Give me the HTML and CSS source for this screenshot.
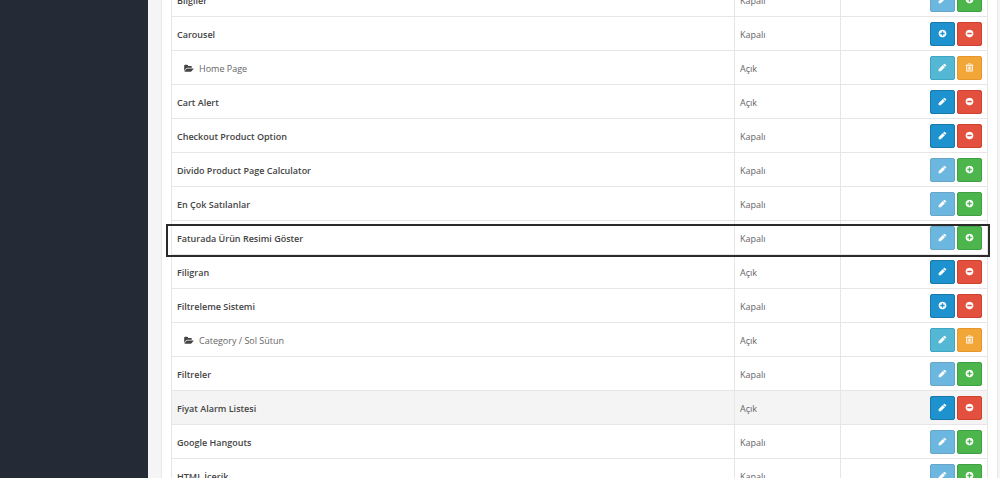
FILE: index.html
```html
<!DOCTYPE html>
<html lang="tr">
<head>
    <meta charset="UTF-8">
    <meta name="viewport" content="width=device-width, initial-scale=1.0">
    <title>Modüller</title>
    <link rel="stylesheet" href="styles.css">
</head>
<body>

    <svg class="sprite" aria-hidden="true">
        <symbol id="pencil" viewBox="0 0 1792 1792"><path d="M960 416l416 416-832 832h-416v-416zM1643 512q0 53-37 90l-166 166-416-416 166-165q36-38 90-38 53 0 91 38l235 234q37 39 37 91z"/></symbol>
        <symbol id="plus" viewBox="0 0 1792 1792"><path d="M1344 960v-128q0-26-19-45t-45-19h-256v-256q0-26-19-45t-45-19h-128q-26 0-45 19t-19 45v256h-256q-26 0-45 19t-19 45v128q0 26 19 45t45 19h256v256q0 26 19 45t45 19h128q26 0 45-19t19-45v-256h256q26 0 45-19t19-45zm320-64q0 209-103 385.500t-279.500 279.500-385.500 103-385.500-103-279.500-279.500-103-385.500 103-385.500 279.500-279.500 385.500-103 385.500 103 279.500 279.500 103 385.500z"/></symbol>
        <symbol id="minus" viewBox="0 0 1792 1792"><path d="M1344 960v-128q0-26-19-45t-45-19h-768q-26 0-45 19t-19 45v128q0 26 19 45t45 19h768q26 0 45-19t19-45zm320-64q0 209-103 385.500t-279.500 279.500-385.500 103-385.500-103-279.500-279.500-103-385.500 103-385.500 279.500-279.500 385.500-103 385.500 103 279.500 279.500 103 385.500z"/></symbol>
        <symbol id="trash" viewBox="0 0 1792 1792"><path fill-rule="evenodd" d="M540 704h180v640h-180zM806 704h180v640h-180zM1072 704h180v640h-180zM400 540v900l48 76h896l48-76v-900zM672 384h448l-48-117-17-11h-317l-17 11zM1640 380v140q0 32-32 32h-50v908q0 100-47 161t-113 60h-1004q-66 0-113-58t-47-159v-912h-50q-32 0-32-32v-140q0-32 32-32h309l70-167q15-37 54-63t79-26h400q40 0 79 26t54 63l70 167h309q32 0 32 32z"/></symbol>
        <symbol id="folder" viewBox="0 0 1920 1792"><path d="M1879 952q0 31-31 66l-336 396q-43 51-120.500 86.500t-143.500 35.500h-1088q-34 0-60.500-13t-26.500-43q0-31 31-66l336-396q43-51 120.500-86.500t143.500-35.500h1088q34 0 60.500 13t26.500 43zm-343-344v160h-832q-94 0-197 47.500t-164 119.500l-337 396-5 6q0-4-.5-12.500t-.5-12.500v-960q0-92 66-158t158-66h320q92 0 158 66t66 158v32h544q92 0 158 66t66 158z"/></symbol>
    </svg>

    <div class="layout">
        <aside class="sidebar"></aside>
        <main class="content">
            <div class="panel">
                <table class="modules">
                    <colgroup>
                        <col class="col-name">
                        <col class="col-status">
                        <col class="col-action">
                    </colgroup>
                    <tbody>
                        <tr>
                            <th scope="row">Bilgiler</th>
                            <td>Kapalı</td>
                            <td><div class="actions"><button class="btn primary" aria-label="Düzenle" disabled><svg><use href="#pencil"/></svg></button><button class="btn success" aria-label="Kur"><svg><use href="#plus"/></svg></button></div></td>
                        </tr>
                        <tr>
                            <th scope="row">Carousel</th>
                            <td>Kapalı</td>
                            <td><div class="actions"><button class="btn primary" aria-label="Ekle"><svg><use href="#plus"/></svg></button><button class="btn danger" aria-label="Kaldır"><svg><use href="#minus"/></svg></button></div></td>
                        </tr>
                        <tr>
                            <td class="child"><svg class="folder"><use href="#folder"/></svg>Home Page</td>
                            <td>Açık</td>
                            <td><div class="actions"><button class="btn info" aria-label="Düzenle"><svg><use href="#pencil"/></svg></button><button class="btn warning" aria-label="Sil"><svg><use href="#trash"/></svg></button></div></td>
                        </tr>
                        <tr>
                            <th scope="row">Cart Alert</th>
                            <td>Açık</td>
                            <td><div class="actions"><button class="btn primary" aria-label="Düzenle"><svg><use href="#pencil"/></svg></button><button class="btn danger" aria-label="Kaldır"><svg><use href="#minus"/></svg></button></div></td>
                        </tr>
                        <tr>
                            <th scope="row">Checkout Product Option</th>
                            <td>Kapalı</td>
                            <td><div class="actions"><button class="btn primary" aria-label="Düzenle"><svg><use href="#pencil"/></svg></button><button class="btn danger" aria-label="Kaldır"><svg><use href="#minus"/></svg></button></div></td>
                        </tr>
                        <tr>
                            <th scope="row">Divido Product Page Calculator</th>
                            <td>Kapalı</td>
                            <td><div class="actions"><button class="btn primary" aria-label="Düzenle" disabled><svg><use href="#pencil"/></svg></button><button class="btn success" aria-label="Kur"><svg><use href="#plus"/></svg></button></div></td>
                        </tr>
                        <tr>
                            <th scope="row">En Çok Satılanlar</th>
                            <td>Kapalı</td>
                            <td><div class="actions"><button class="btn primary" aria-label="Düzenle" disabled><svg><use href="#pencil"/></svg></button><button class="btn success" aria-label="Kur"><svg><use href="#plus"/></svg></button></div></td>
                        </tr>
                        <tr class="marked">
                            <th scope="row">Faturada Ürün Resimi Göster</th>
                            <td>Kapalı</td>
                            <td><div class="actions"><button class="btn primary" aria-label="Düzenle" disabled><svg><use href="#pencil"/></svg></button><button class="btn success" aria-label="Kur"><svg><use href="#plus"/></svg></button></div></td>
                        </tr>
                        <tr>
                            <th scope="row">Filigran</th>
                            <td>Açık</td>
                            <td><div class="actions"><button class="btn primary" aria-label="Düzenle"><svg><use href="#pencil"/></svg></button><button class="btn danger" aria-label="Kaldır"><svg><use href="#minus"/></svg></button></div></td>
                        </tr>
                        <tr>
                            <th scope="row">Filtreleme Sistemi</th>
                            <td>Kapalı</td>
                            <td><div class="actions"><button class="btn primary" aria-label="Ekle"><svg><use href="#plus"/></svg></button><button class="btn danger" aria-label="Kaldır"><svg><use href="#minus"/></svg></button></div></td>
                        </tr>
                        <tr>
                            <td class="child"><svg class="folder"><use href="#folder"/></svg>Category / Sol Sütun</td>
                            <td>Açık</td>
                            <td><div class="actions"><button class="btn info" aria-label="Düzenle"><svg><use href="#pencil"/></svg></button><button class="btn warning" aria-label="Sil"><svg><use href="#trash"/></svg></button></div></td>
                        </tr>
                        <tr>
                            <th scope="row">Filtreler</th>
                            <td>Kapalı</td>
                            <td><div class="actions"><button class="btn primary" aria-label="Düzenle" disabled><svg><use href="#pencil"/></svg></button><button class="btn success" aria-label="Kur"><svg><use href="#plus"/></svg></button></div></td>
                        </tr>
                        <tr class="active">
                            <th scope="row">Fiyat Alarm Listesi</th>
                            <td>Açık</td>
                            <td><div class="actions"><button class="btn primary" aria-label="Düzenle"><svg><use href="#pencil"/></svg></button><button class="btn danger" aria-label="Kaldır"><svg><use href="#minus"/></svg></button></div></td>
                        </tr>
                        <tr>
                            <th scope="row">Google Hangouts</th>
                            <td>Kapalı</td>
                            <td><div class="actions"><button class="btn primary" aria-label="Düzenle" disabled><svg><use href="#pencil"/></svg></button><button class="btn success" aria-label="Kur"><svg><use href="#plus"/></svg></button></div></td>
                        </tr>
                        <tr>
                            <th scope="row">HTML İçerik</th>
                            <td>Kapalı</td>
                            <td><div class="actions"><button class="btn primary" aria-label="Düzenle" disabled><svg><use href="#pencil"/></svg></button><button class="btn success" aria-label="Kur"><svg><use href="#plus"/></svg></button></div></td>
                        </tr>
                    </tbody>
                </table>
            </div>
        </main>
    </div>

</body>
</html>
```
FILE: styles.css
```css
* {
    box-sizing: border-box;
}

body {
    margin: 0;
    overflow: hidden;
    font-family: "Open Sans", sans-serif;
    font-size: 9px;
    line-height: 12px;
    color: #666;
    background: #f5f5f5;
}

.sprite {
    display: none;
}

.layout {
    display: flex;
    height: 100vh;
}

.sidebar {
    flex: none;
    width: 148px;
    background: #242b36;
}

.content {
    flex: 1;
    min-width: 0;
    padding: 0 2px 0 13px;
    overflow: hidden;
}

.panel {
    padding: 0 9px;
    border: solid #e8e8e8;
    border-width: 0 1px;
    background: #fff;
}

/* the list is scrolled half a row down */
.modules {
    width: 100%;
    margin-top: -17px;
    table-layout: fixed;
    border-collapse: separate;
    border-spacing: 0;
    border-right: 1px solid #e6e6e6;
}

.col-name {
    width: 69%;
}

.col-status {
    width: 13%;
}

.col-action {
    width: 18%;
}

.modules tr {
    position: relative;
    height: 34px;
}

.modules th,
.modules td {
    padding: 2px 5px 0;
    text-align: left;
    vertical-align: middle;
    border-left: 1px solid #e6e6e6;
    border-bottom: 1px solid #e6e6e6;
}

.modules td:last-child {
    padding-top: 0;
}

.modules th {
    font-weight: 600;
    color: #444;
}

.modules .child {
    padding-left: 12px;
}

.active {
    background: #f4f4f4;
}

.folder {
    width: 10px;
    height: 9px;
    margin-right: 5px;
    vertical-align: -1px;
    fill: #444;
}

.modules .marked {
    z-index: 1;
}

.marked::after {
    content: "";
    position: absolute;
    top: 3px;
    right: -3px;
    bottom: -2px;
    left: -5px;
    border: 2px solid #2b2b2b;
    pointer-events: none;
}

.actions {
    display: flex;
    justify-content: flex-end;
    gap: 2px;
}

.btn {
    display: flex;
    align-items: center;
    justify-content: center;
    width: 25px;
    height: 24px;
    padding: 0;
    border: 1px solid;
    border-radius: 2px;
    cursor: pointer;
}

.btn svg {
    width: 9px;
    height: 9px;
    fill: #fff;
}

.btn:disabled {
    opacity: 0.65;
    cursor: default;
}

.primary {
    background: #1e91cf;
    border-color: #1978ab;
}

.success {
    background: #4cb64c;
    border-color: #409f40;
}

.danger {
    background: #e3503e;
    border-color: #cf402f;
}

.info {
    background: #54b7d3;
    border-color: #3fa5c2;
}

.warning {
    background: #f3a638;
    border-color: #e6962a;
}
```
